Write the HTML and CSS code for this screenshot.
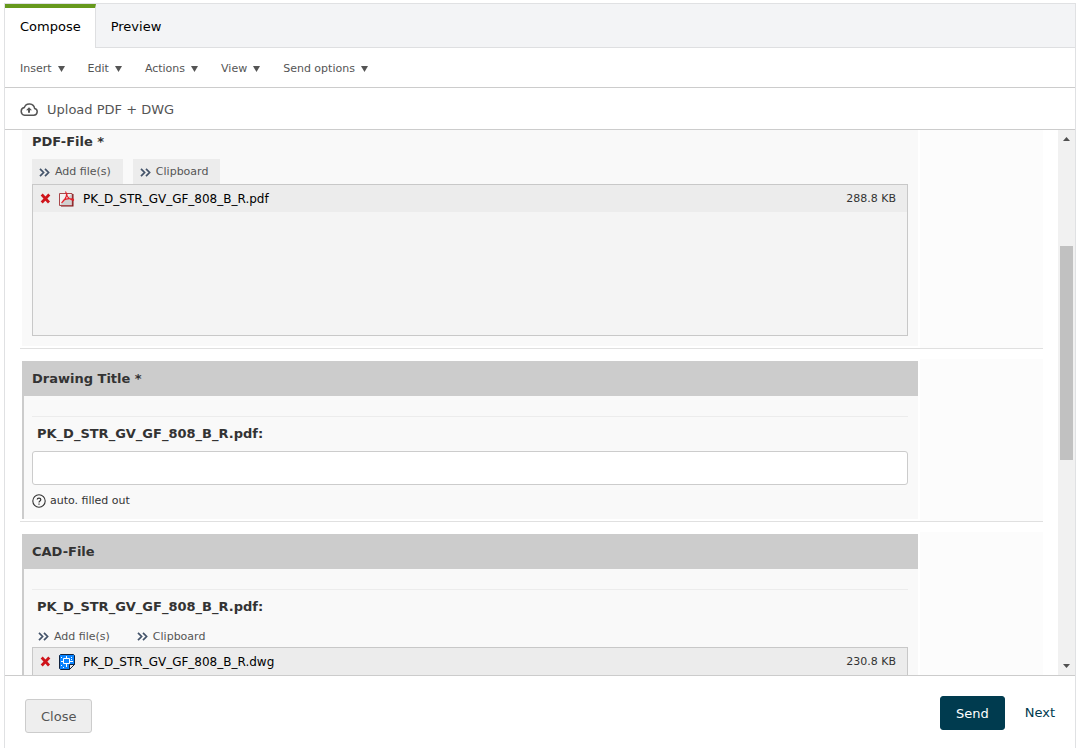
FILE: index.html
```html
<!DOCTYPE html>
<html lang="en">
<head>
    <meta charset="UTF-8">
    <meta name="viewport" content="width=device-width, initial-scale=1.0">
    <title>Upload PDF + DWG</title>
    <link rel="stylesheet" href="styles.css">
</head>
<body>

    <!-- Shared icons -->
    <svg class="icon-defs" aria-hidden="true">
        <symbol id="icon-caret" viewBox="0 0 7 6">
            <path d="M0 0h7L3.5 6z" fill="#555"/>
        </symbol>
        <symbol id="icon-more" viewBox="0 0 11 9">
            <path d="M1 .8 4.6 4.5 1 8.2M6 .8 9.6 4.5 6 8.2" fill="none" stroke="#44546a" stroke-width="1.7"/>
        </symbol>
        <symbol id="icon-delete" viewBox="0 0 11 11">
            <path d="M1.700 1.500 9 9.500M9.300 1.500 1.700 9.500" fill="none" stroke="#cf141b" stroke-width="2.800"/>
        </symbol>
    </svg>

    <div class="window">

        <!-- Tabs -->
        <nav class="tabs">
            <a href="#" class="tab active">Compose</a>
            <a href="#" class="tab">Preview</a>
        </nav>

        <!-- Menu bar -->
        <div class="menubar">
            <button type="button">Insert <svg class="caret"><use href="#icon-caret"/></svg></button>
            <button type="button">Edit <svg class="caret"><use href="#icon-caret"/></svg></button>
            <button type="button">Actions <svg class="caret"><use href="#icon-caret"/></svg></button>
            <button type="button">View <svg class="caret"><use href="#icon-caret"/></svg></button>
            <button type="button">Send options <svg class="caret"><use href="#icon-caret"/></svg></button>
        </div>

        <!-- Page title -->
        <div class="titlebar">
            <svg class="cloud" viewBox="0 0 18 13">
                <path d="M4.6 12.2h9.2a3.4 3.4 0 0 0 .8-6.7A5.3 5.3 0 0 0 4.3 4.6 3.85 3.85 0 0 0 4.6 12.2z" fill="none" stroke="#555" stroke-width="1.5"/>
                <path d="M9 4.2 12 7.3h-2v2.5H8V7.3H6z" fill="#555"/>
            </svg>
            <span>Upload PDF + DWG</span>
        </div>

        <!-- Form -->
        <div class="viewport">
            <form class="form">
                <div class="row">
                    <div class="field plain">
                        <h2>PDF-File *</h2>
                        <div class="actions filled">
                            <button type="button"><svg class="more"><use href="#icon-more"/></svg>Add file(s)</button>
                            <button type="button"><svg class="more"><use href="#icon-more"/></svg>Clipboard</button>
                        </div>
                        <div class="files">
                            <div class="file">
                                <button type="button" class="delete" aria-label="Remove"><svg><use href="#icon-delete"/></svg></button>
                                <svg class="file-icon" viewBox="0 0 16 16">
                                    <path d="M2 3h12.500v12.500H2z" fill="#7d1417"/>
                                    <path d="M.5 2.500h12.500v12H.5z" fill="#f2f2f2" stroke="#a8474a"/>
                                    <path d="M1 14 12.500 3v11z" fill="#d0d0d0"/>
                                    <path d="M6.500.5c2 2.500 1.300 7-4 11.500M7.500 2c.2 3.500 2.500 6.500 7.500 7.500M4 9.500c3-2 7-2.500 11-1" fill="none" stroke="#e3202a" stroke-width="1.200"/>
                                </svg>
                                <span class="name">PK_D_STR_GV_GF_808_B_R.pdf</span>
                                <span class="size">288.8 KB</span>
                            </div>
                        </div>
                    </div>
                    <div class="side"></div>
                </div>

                <div class="row">
                    <div class="field">
                        <h2>Drawing Title *</h2>
                        <div class="field-body">
                            <label class="file-label" for="drawing-title">PK_D_STR_GV_GF_808_B_R.pdf:</label>
                            <input type="text" id="drawing-title">
                            <p class="help">
                                <svg viewBox="0 0 14 14">
                                    <circle cx="7" cy="7" r="6.200" fill="none" stroke="#333" stroke-width="1.1"/>
                                    <path d="M5.200 5.600C5.200 3.600 8.800 3.600 8.800 5.600 8.800 7 7 6.900 7 8.500M7 9.500v1.200" fill="none" stroke="#333" stroke-width="1.200"/>
                                </svg>
                                <span>auto. filled out</span>
                            </p>
                        </div>
                    </div>
                    <div class="side"></div>
                </div>

                <div class="row">
                    <div class="field">
                        <h2>CAD-File</h2>
                        <div class="field-body">
                            <div class="file-label">PK_D_STR_GV_GF_808_B_R.pdf:</div>
                            <div class="actions">
                                <button type="button"><svg class="more"><use href="#icon-more"/></svg>Add file(s)</button>
                                <button type="button"><svg class="more"><use href="#icon-more"/></svg>Clipboard</button>
                            </div>
                            <div class="files">
                                <div class="file">
                                    <button type="button" class="delete" aria-label="Remove"><svg><use href="#icon-delete"/></svg></button>
                                    <svg class="file-icon" viewBox="0 0 16 16">
                                        <path d="M1.500.5h13l1 1v9l-5 5h-9l-1-1v-13z" fill="#0a84ff" stroke="#10233f"/>
                                        <path d="M4.500 4.500h6v5h-6zM7.500 2v3M7.500 9v4M2 7.500h3M10 7.500h4" fill="none" stroke="#fff"/>
                                        <path d="M2 3.500h1M12 3.500h1M2 11.500h1M12 5.500h1M4 13.500h1" stroke="#fff"/>
                                        <path d="M10.500 15.500v-5h5z" fill="#e8e8e8" stroke="#10233f"/>
                                    </svg>
                                    <span class="name">PK_D_STR_GV_GF_808_B_R.dwg</span>
                                    <span class="size">230.8 KB</span>
                                </div>
                            </div>
                        </div>
                    </div>
                    <div class="side"></div>
                </div>
            </form>

            <div class="scrollbar">
                <svg class="arrow" viewBox="0 0 17 17"><path d="M5 11h7L8.500 7z" fill="#505050"/></svg>
                <div class="track">
                    <div class="before"></div>
                    <div class="thumb"></div>
                    <div class="after"></div>
                </div>
                <svg class="arrow" viewBox="0 0 17 17"><path d="M5 6h7L8.500 10z" fill="#505050"/></svg>
            </div>
        </div>

        <!-- Footer -->
        <div class="footer">
            <button type="button" class="btn btn-close">Close</button>
            <div class="footer-right">
                <button type="button" class="btn btn-send">Send</button>
                <a href="#" class="next">Next</a>
            </div>
        </div>
    </div>

</body>
</html>
```
FILE: styles.css
```css
/* General Styles */
* {
    box-sizing: border-box;
}

body {
    margin: 0;
    padding: 3px 6px 0 4px;
    height: 100vh;
    background-color: #fff;
    color: #333;
    font-family: Verdana, 'DejaVu Sans', sans-serif;
    font-size: 11px;
    line-height: 16px;
    overflow: hidden;
}

button {
    font: inherit;
    color: #555;
    background: none;
    border: none;
    padding: 0;
    cursor: pointer;
}

a {
    text-decoration: none;
}

.icon-defs {
    display: none;
}

.window {
    height: 100%;
    display: flex;
    flex-direction: column;
    border: 1px solid #e0e1e3;
    border-bottom: none;
}

/* Tabs */
.tabs {
    display: flex;
    height: 44px;
    flex-shrink: 0;
    background-color: #f3f4f6;
    box-shadow: inset 0 -1px #dedfe1;
}

.tab {
    padding: 15px 15px 0;
    color: #000;
    font-size: 13px;
}

.tab.active {
    padding-top: 11px;
    padding-right: 14px;
    background-color: #fff;
    border-top: 4px solid #66991c;
    border-right: 1px solid #dedfe1;
}

/* Menu bar */
.menubar {
    display: flex;
    align-items: center;
    gap: 23px;
    height: 40px;
    flex-shrink: 0;
    padding: 2px 15px 0;
    border-bottom: 1px solid #ccc;
}

.menubar button {
    display: flex;
    align-items: center;
    gap: 6px;
}

.caret {
    width: 7px;
    height: 6px;
}

/* Title bar */
.titlebar {
    display: flex;
    align-items: center;
    gap: 9px;
    height: 42px;
    flex-shrink: 0;
    padding: 2px 15px 0;
    border-bottom: 1px solid #ccc;
    color: #555;
    font-size: 13px;
}

.cloud {
    width: 18px;
    height: 13px;
}

/* Form */
.viewport {
    display: flex;
    flex: 1;
    min-height: 0;
    overflow: hidden;
}

.form {
    flex: 1;
    padding: 0 15px;
}

.row {
    display: flex;
    gap: 2px;
    margin-bottom: 10px;
    padding-left: 2px;
    border-bottom: 1px solid #e0e0e0;
}

.side {
    width: 123px;
    background-color: #fcfcfc;
}

.field {
    flex: 1;
    margin: 2px 0;
    background-color: #f9f9f9;
}

.field h2 {
    margin: 0;
    padding: 0 10px;
    background-color: #ccc;
    font-size: 13px;
    line-height: 35px;
}

.field.plain {
    margin-top: 0;
    padding: 0 10px 10px;
}

.field.plain h2 {
    padding: 0 0 6px;
    background: none;
    line-height: 23px;
}

.field-body {
    padding: 20px 10px 10px 8px;
    border-left: 2px solid #ccc;
}

.file-label {
    display: block;
    padding: 0 5px;
    border-top: 1px solid #ececec;
    font-size: 13px;
    font-weight: bold;
    line-height: 34px;
}

.field-body input {
    display: block;
    width: 100%;
    height: 34px;
    padding: 0 8px;
    border: 1px solid #ccc;
    border-radius: 3px;
    background-color: #fff;
    font: inherit;
}

.help {
    display: flex;
    align-items: center;
    gap: 4px;
    margin: 8px 0 0;
}

.help svg {
    width: 14px;
    height: 14px;
}

/* File actions */
.actions {
    display: flex;
    gap: 16px;
    padding-left: 6px;
}

.actions button {
    display: flex;
    align-items: center;
    gap: 5px;
    height: 23px;
    padding: 2px 11px 0 0;
}

.actions.filled {
    gap: 10px;
    padding-left: 0;
}

.actions.filled button {
    height: 25px;
    padding: 1px 12px 0 7px;
    background-color: #ececec;
}

.more {
    width: 11px;
    height: 9px;
}

.files {
    height: 152px;
    border: 1px solid #c8c8c8;
    background-color: #f4f4f4;
}

.file {
    display: flex;
    align-items: center;
    height: 27px;
    padding: 0 11px 0 7px;
    background-color: #ececec;
    color: #000;
}

.delete svg {
    display: block;
    width: 11px;
    height: 11px;
}

.file-icon {
    width: 16px;
    height: 16px;
    margin: 0 8px;
}

.name {
    font-size: 12px;
}

.size {
    margin-left: auto;
    color: #333;
}

/* Scrollbar */
.scrollbar {
    display: flex;
    flex-direction: column;
    width: 17px;
    background-color: #f1f1f1;
}

.arrow {
    width: 17px;
    height: 17px;
}

.track {
    display: flex;
    flex: 1;
    flex-direction: column;
    padding: 0 2px;
}

.before {
    flex: 99;
}

.thumb {
    flex: 214;
    background-color: #c1c1c1;
}

.after {
    flex: 198;
}

/* Footer */
.footer {
    display: flex;
    justify-content: space-between;
    align-items: flex-start;
    height: 73px;
    flex-shrink: 0;
    padding: 20px;
    border-top: 1px solid #ccc;
    font-size: 13px;
}

.btn {
    height: 34px;
    padding: 1px 15px 0;
    border: 1px solid #ccc;
    border-radius: 3px;
}

.btn-close {
    margin-top: 3px;
    background-color: #eee;
}

.btn-send {
    border-color: #003b4f;
    background-color: #003b4f;
    color: #fff;
}

.footer-right {
    display: flex;
    align-items: center;
    gap: 20px;
}

.next {
    color: #003b4f;
}
```
